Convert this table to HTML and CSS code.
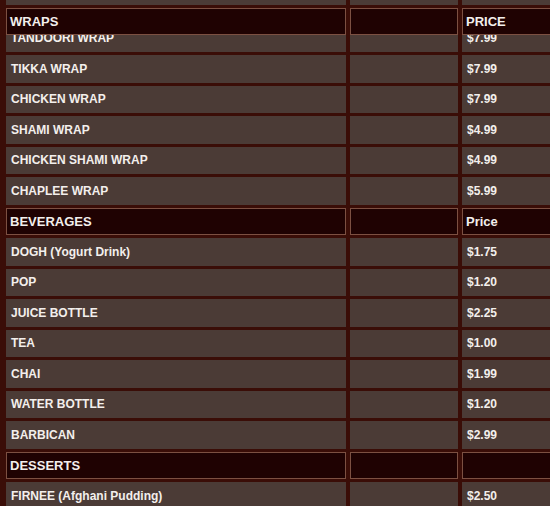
FILE: index.html
```html
<!DOCTYPE html>
<html>
<head>
<meta charset="utf-8">
<link rel="stylesheet" href="styles.css">
</head>
<body>
<div class="menu">
  <div class="row partial"><div class="cell"></div><div class="cell"></div><div class="cell"></div></div>
  <div class="row head"><div class="cell">WRAPS</div><div class="cell"></div><div class="cell">PRICE</div></div>
  <div class="row clipped"><div class="cell"><span>TANDOORI WRAP</span></div><div class="cell"></div><div class="cell"><span>$7.99</span></div></div>
  <div class="row"><div class="cell">TIKKA WRAP</div><div class="cell"></div><div class="cell">$7.99</div></div>
  <div class="row"><div class="cell">CHICKEN WRAP</div><div class="cell"></div><div class="cell">$7.99</div></div>
  <div class="row"><div class="cell">SHAMI WRAP</div><div class="cell"></div><div class="cell">$4.99</div></div>
  <div class="row"><div class="cell">CHICKEN SHAMI WRAP</div><div class="cell"></div><div class="cell">$4.99</div></div>
  <div class="row"><div class="cell">CHAPLEE WRAP</div><div class="cell"></div><div class="cell">$5.99</div></div>
  <div class="row head"><div class="cell">BEVERAGES</div><div class="cell"></div><div class="cell">Price</div></div>
  <div class="row"><div class="cell">DOGH (Yogurt Drink)</div><div class="cell"></div><div class="cell">$1.75</div></div>
  <div class="row"><div class="cell">POP</div><div class="cell"></div><div class="cell">$1.20</div></div>
  <div class="row"><div class="cell">JUICE BOTTLE</div><div class="cell"></div><div class="cell">$2.25</div></div>
  <div class="row"><div class="cell">TEA</div><div class="cell"></div><div class="cell">$1.00</div></div>
  <div class="row"><div class="cell">CHAI</div><div class="cell"></div><div class="cell">$1.99</div></div>
  <div class="row"><div class="cell">WATER BOTTLE</div><div class="cell"></div><div class="cell">$1.20</div></div>
  <div class="row"><div class="cell">BARBICAN</div><div class="cell"></div><div class="cell">$2.99</div></div>
  <div class="row head"><div class="cell">DESSERTS</div><div class="cell"></div><div class="cell"></div></div>
  <div class="row"><div class="cell">FIRNEE (Afghani Pudding)</div><div class="cell"></div><div class="cell">$2.50</div></div>
</div>
</body>
</html>
```
FILE: styles.css
```css
html, body {
  margin: 0;
  padding: 0;
  background: #3a0d07;
  overflow: hidden;
  width: 550px;
  height: 506px;
}
.menu {
  display: flex;
  flex-direction: column;
  gap: 3px;
  padding-left: 6px;
  width: 600px;
  font-family: "Liberation Sans", Arial, sans-serif;
  font-weight: bold;
  font-size: 12px;
  color: #f3efec;
}
.row {
  display: grid;
  grid-template-columns: 340px 108px 110px;
  column-gap: 4px;
  height: 27.5px;
}
.cell {
  background: #4b3b36;
  display: flex;
  align-items: center;
  padding-left: 5px;
  box-sizing: border-box;
  overflow: hidden;
  white-space: nowrap;
}
.partial {
  height: 4.5px;
}
.head .cell {
  background: #1f0202;
  border: 1px solid #7c5042;
  font-size: 13px;
  padding-left: 3px;
}
.clipped {
  height: 17px;
  margin-top: -3px;
}
.clipped .cell {
  align-items: flex-end;
}
.clipped .cell span {
  display: block;
  line-height: 27.5px;
}
```
